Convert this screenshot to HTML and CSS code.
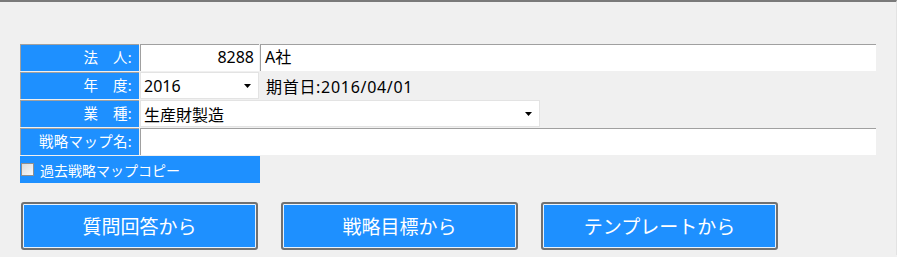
FILE: index.html
```html
<!DOCTYPE html>
<html lang="ja">
<head>
    <meta charset="UTF-8">
    <title>戦略マップ作成</title>
    <link rel="stylesheet" href="styles.css">
</head>
<body>
    <div class="window">
        <div class="form">
            <div class="row">
                <div class="label">法　人:</div>
                <div class="field code">8288</div>
                <div class="field name">A社</div>
            </div>
            <div class="row">
                <div class="label">年　度:</div>
                <div class="combo year">
                    <span>2016</span>
                    <svg width="7" height="4" viewBox="0 0 7 4"><path d="M0 0h7L3.5 4z" fill="#000"/></svg>
                </div>
                <div class="note">期首日:2016/04/01</div>
            </div>
            <div class="row">
                <div class="label">業　種:</div>
                <div class="combo industry">
                    <span>生産財製造</span>
                    <svg width="7" height="4" viewBox="0 0 7 4"><path d="M0 0h7L3.5 4z" fill="#000"/></svg>
                </div>
            </div>
            <div class="row">
                <div class="label">戦略マップ名:</div>
                <div class="field mapname"></div>
            </div>
            <div class="row">
                <label class="copy">
                    <span class="check"></span>
                    過去戦略マップコピー
                </label>
            </div>
        </div>

        <div class="buttons">
            <button>質問回答から</button>
            <button>戦略目標から</button>
            <button>テンプレートから</button>
        </div>
    </div>
</body>
</html>
```

FILE: styles.css
```css
body {
    margin: 0;
    background: #f0f0f0;
    font-family: "Noto Sans", "Noto Sans CJK JP", sans-serif;
    font-size: 14px;
    color: #000;
}
.window {
    height: 255px;
    border-top: 2px solid #7a7a7a;
    border-right: 1px solid #e3e3e3;
    box-sizing: border-box;
    padding: 42px 0 0 20px;
}
.form {
    display: flex;
    flex-direction: column;
    gap: 1px;
}
.row {
    display: flex;
    align-items: center;
    gap: 1px;
    height: 27px;
}
.label {
    width: 119px;
    height: 27px;
    box-sizing: border-box;
    border-top: 1px solid #a0a0a0;
    border-left: 1px solid #a0a0a0;
    background: #1e90ff;
    color: #fff;
    text-align: right;
    padding-right: 7px;
    line-height: 25px;
    font-size: 14.5px;
    letter-spacing: 0.3px;
}
.field {
    height: 27px;
    box-sizing: border-box;
    background: #fff;
    border-top: 1px solid #a0a0a0;
    border-left: 1px solid #a0a0a0;
    line-height: 25px;
    padding: 0 5px 0 4px;
    font-size: 16px;
}
.code {
    width: 119px;
    text-align: right;
}
.name {
    width: 616px;
}
.mapname {
    width: 736px;
}
.combo {
    height: 27px;
    box-sizing: border-box;
    background: #fff;
    border: 1px solid #e3e3e3;
    display: flex;
    align-items: center;
    justify-content: space-between;
    padding: 0 7px 0 3px;
    font-size: 16px;
}
.year {
    width: 119px;
}
.industry {
    width: 400px;
}
.note {
    margin-left: 6px;
    font-size: 16px;
    letter-spacing: 0.7px;
}
.copy {
    width: 240px;
    height: 27px;
    background: #1e90ff;
    color: #fff;
    display: flex;
    align-items: center;
    gap: 6px;
    padding-left: 1px;
    box-sizing: border-box;
    font-size: 14px;
}
.check {
    width: 11px;
    height: 11px;
    border: 1px solid #8f8f8f;
    background: linear-gradient(135deg, #dcdcdc, #f8f8f8);
}
.buttons {
    display: flex;
    gap: 23px;
    margin-top: 19px;
    padding-left: 1px;
}
button {
    width: 237px;
    height: 48px;
    background: #1e90ff;
    border: 2px solid #707070;
    border-radius: 3px;
    box-shadow: inset 0 0 0 1px #e8f2fc;
    color: #fff;
    font-family: inherit;
    font-size: 19px;
    cursor: pointer;
}
```
